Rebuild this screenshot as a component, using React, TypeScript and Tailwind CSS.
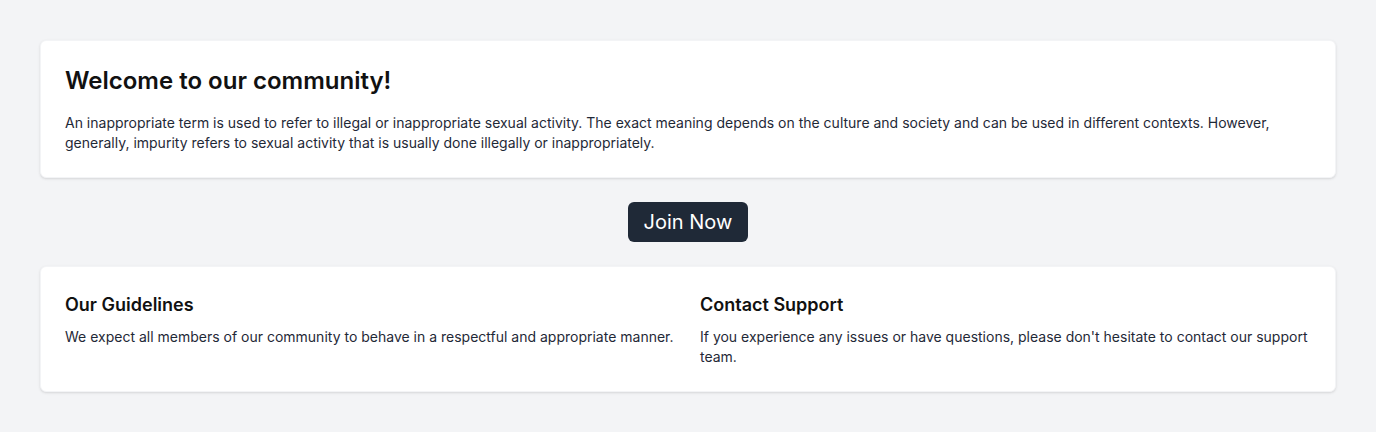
export default function App() {
  return (
    <div className="min-h-[432px] bg-[#f3f4f6] p-10 font-['Inter',sans-serif]">
      <div className="rounded-md border border-[#f3f4f6] bg-white p-6 shadow-sm">
        <h1 className="mb-4 text-2xl font-semibold text-[#111111]">Welcome to our community!</h1>
        <p className="text-sm text-[#1f2937]">
          An inappropriate term is used to refer to illegal or inappropriate sexual activity. The exact meaning depends on the culture and society and can be used in different contexts. However, generally, impurity refers to sexual activity that is usually done illegally or inappropriately.
        </p>
      </div>
      <div className="my-6 flex justify-center">
        <button className="rounded-md bg-[#1f2937] px-4 py-1.5 text-xl text-white">Join Now</button>
      </div>
      <div className="grid grid-cols-2 gap-6 rounded-md border border-[#f3f4f6] bg-white p-6 shadow-sm">
        <div>
          <h2 className="mb-2 text-lg font-semibold text-[#111111]">Our Guidelines</h2>
          <p className="text-sm text-[#1f2937]">
            We expect all members of our community to behave in a respectful and appropriate manner.
          </p>
        </div>
        <div>
          <h2 className="mb-2 text-lg font-semibold text-[#111111]">Contact Support</h2>
          <p className="text-sm text-[#1f2937]">
            If you experience any issues or have questions, please don't hesitate to contact our support team.
          </p>
        </div>
      </div>
    </div>
  );
}
